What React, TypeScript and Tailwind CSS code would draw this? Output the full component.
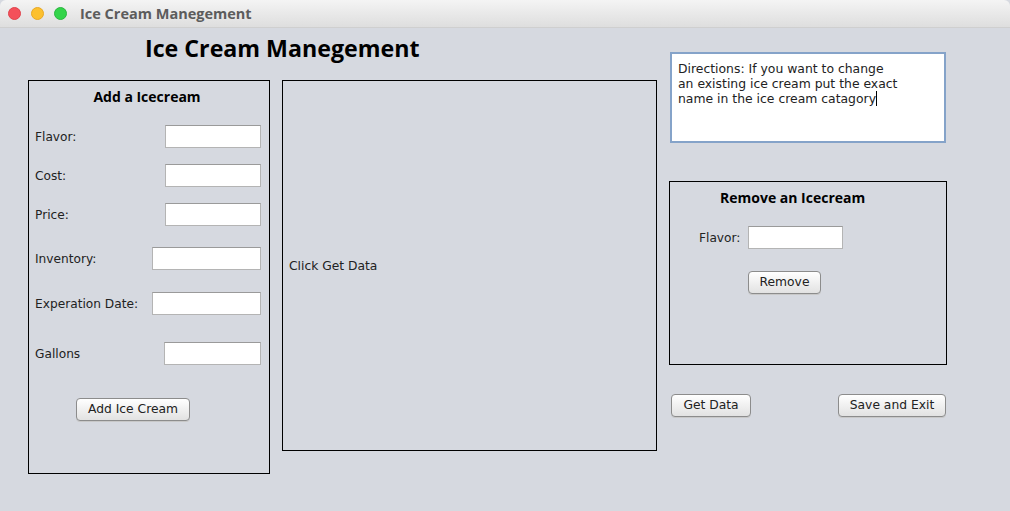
import React from "react";

const font = { fontFamily: '"DejaVu Sans", sans-serif' };
const bold = { fontFamily: '"Open Sans", "DejaVu Sans", sans-serif' };

function Field({ w }: { w: number }) {
  return (
    <div
      className="h-[23px] bg-white border border-[#b4b4b4] border-t-[#9a9a9a]"
      style={{ width: w }}
    />
  );
}

function Btn({ label, w }: { label: string; w: number }) {
  return (
    <div
      className="h-[23px] flex items-center justify-center rounded-[4px] border border-[#8c8c8c] bg-gradient-to-b from-[#ffffff] to-[#e2e2e2] text-[12.3px] text-[#222] shadow-[0_1px_0_#c8c8c8]"
      style={{ width: w }}
    >
      {label}
    </div>
  );
}

function Row({ label, w, mt }: { label: string; w: number; mt: number }) {
  return (
    <div className="flex items-center justify-between pl-[6px] pr-[8px]" style={{ marginTop: mt }}>
      <span className="text-[12.2px] leading-[16px] text-[#222] mt-[1px]">{label}</span>
      <Field w={w} />
    </div>
  );
}

export default function App() {
  return (
    <div className="w-[1010px] h-[511px] bg-[#d6d9e0] overflow-hidden" style={font}>
      {/* title bar */}
      <div className="h-[28px] rounded-t-[6px] bg-gradient-to-b from-[#f4f4f4] to-[#dedede] flex items-center border-b border-[#cfcfcf]">
        <div className="flex items-center gap-[10px] pl-[8px]">
          <div className="w-[13px] h-[13px] rounded-full bg-[#f4505a] border border-[#e0434c]" />
          <div className="w-[13px] h-[13px] rounded-full bg-[#fcc02e] border border-[#e8a824]" />
          <div className="w-[13px] h-[13px] rounded-full bg-[#33d44a] border border-[#2ab63f]" />
        </div>
        <span className="ml-[13px] text-[14.5px] font-bold text-[#5c5c5c]" style={bold}>
          Ice Cream Manegement
        </span>
      </div>

      {/* content */}
      <div className="flex items-start pl-[28px]">
        {/* left block */}
        <div className="flex flex-col">
          <div className="h-[52px] pt-[5px] pl-[117px]">
            <span className="text-[23.2px] leading-[30px] font-bold text-black" style={bold}>
              Ice Cream Manegement
            </span>
          </div>
          <div className="flex items-start gap-[12px]">
            {/* add panel */}
            <div className="w-[242px] h-[394px] border border-black flex flex-col">
              <div className="h-[32px] pt-[7px] pr-[4px] text-center text-[14px] font-bold text-black leading-[18px]" style={bold}>
                Add a Icecream
              </div>
              <Row label="Flavor:" w={96} mt={12} />
              <Row label="Cost:" w={96} mt={16} />
              <Row label="Price:" w={96} mt={16} />
              <Row label="Inventory:" w={109} mt={21} />
              <Row label="Experation Date:" w={109} mt={22} />
              <Row label="Gallons" w={97} mt={27} />
              <div className="pl-[47px] mt-[33px]">
                <Btn label="Add Ice Cream" w={114} />
              </div>
            </div>
            {/* data panel */}
            <div className="w-[375px] h-[371px] border border-black flex items-center pl-[6px]">
              <span className="text-[12.3px] text-[#222] mt-[1px]">Click Get Data</span>
            </div>
          </div>
        </div>

        {/* right column */}
        <div className="flex flex-col ml-[12px] mt-[24px]">
          <div className="ml-[1px] w-[276px] h-[91px] bg-white border-2 border-[#85a3c9] px-[6px] pt-[7px] text-[12.4px] leading-[15px] text-[#222]">
            Directions: If you want to change
            <br />
            an existing ice cream put the exact
            <br />
            name in the ice cream catagory
            <span className="inline-block w-[1px] h-[15px] bg-black align-top" />
          </div>
          <div className="mt-[38px] w-[278px] h-[184px] border border-black flex flex-col">
            <div className="pt-[7px] pl-[50px] text-[14px] font-bold text-black leading-[18px]" style={bold}>
              Remove an Icecream
            </div>
            <div className="flex items-center mt-[19px] pl-[29px]">
              <span className="text-[12.2px] leading-[16px] text-[#222] w-[49px] mt-[1px]">Flavor:</span>
              <Field w={95} />
            </div>
            <div className="mt-[22px] pl-[78px]">
              <Btn label="Remove" w={73} />
            </div>
          </div>
          <div className="mt-[29px] flex items-center justify-between pl-[2px] pr-[1px]">
            <Btn label="Get Data" w={80} />
            <Btn label="Save and Exit" w={108} />
          </div>
        </div>
      </div>
    </div>
  );
}
